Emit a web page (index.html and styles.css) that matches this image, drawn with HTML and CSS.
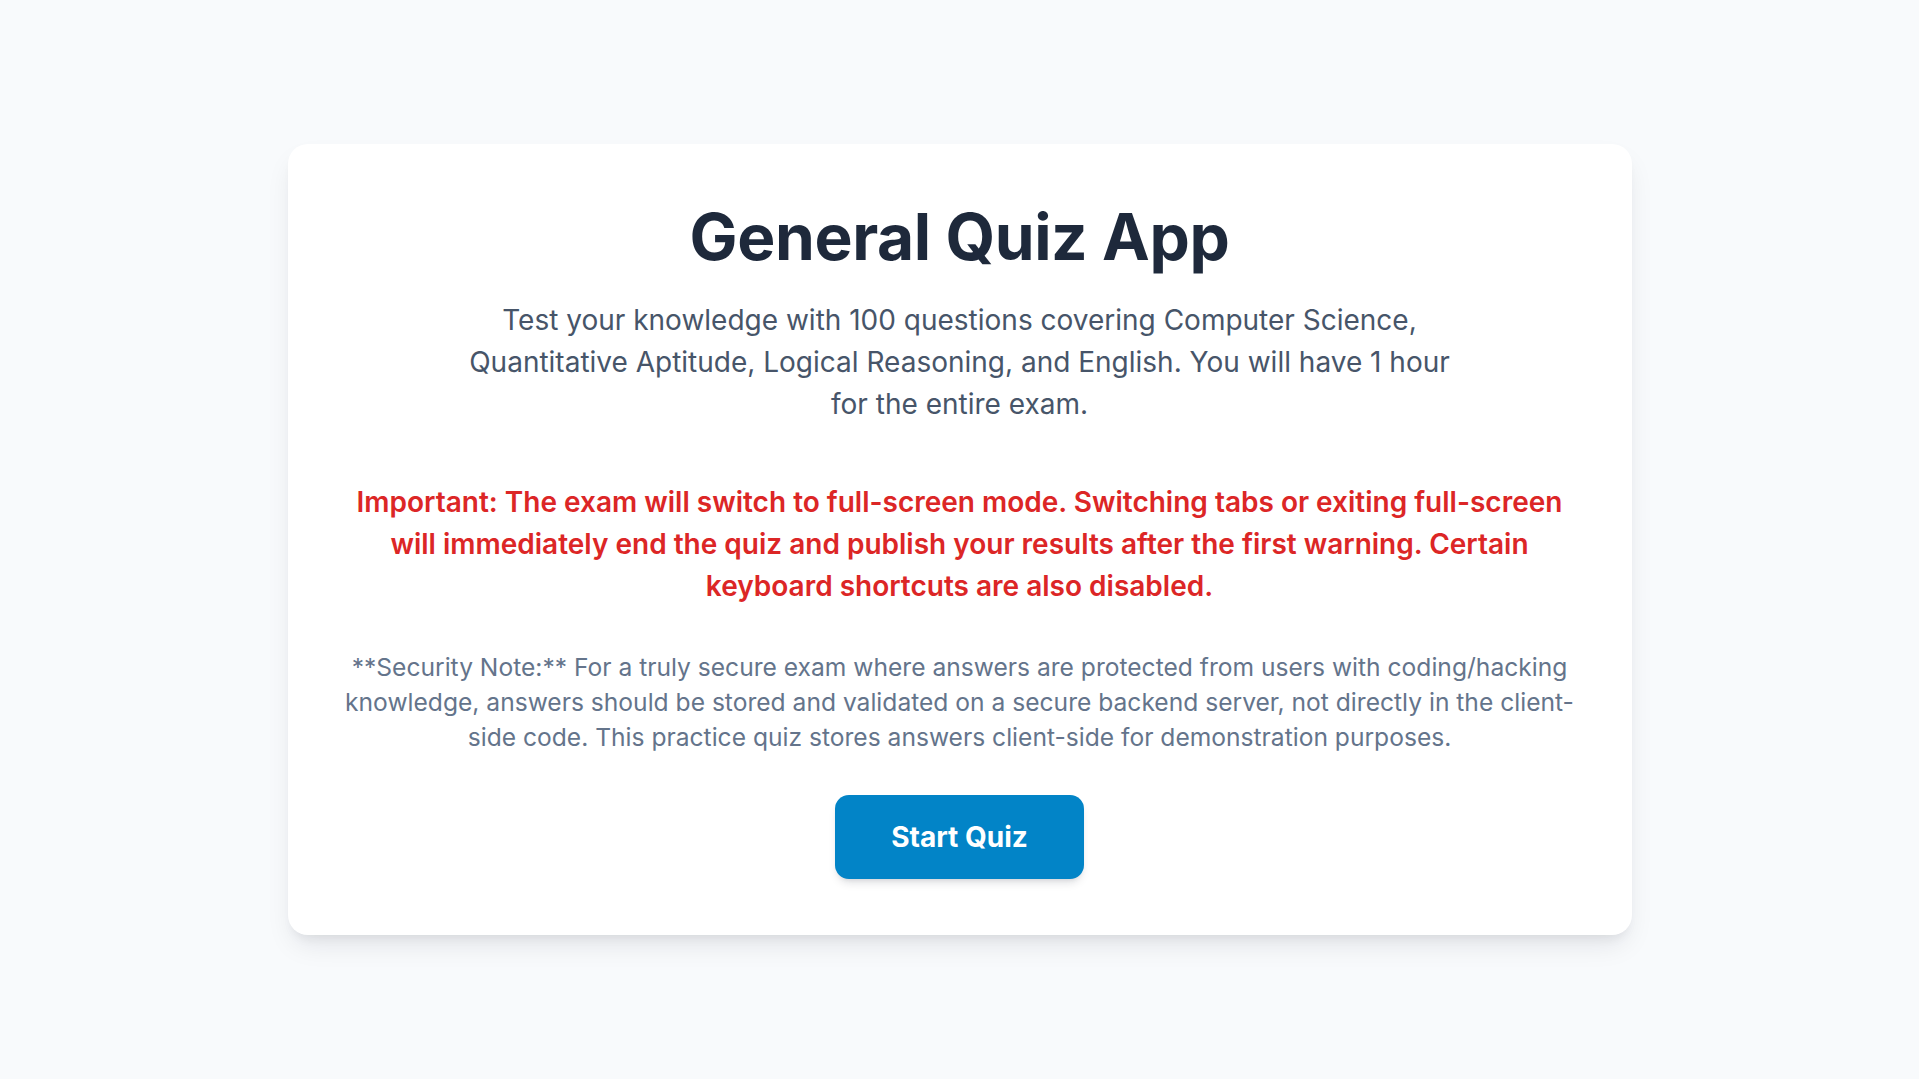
FILE: index.html
```html
<!DOCTYPE html>
<html lang="en">
<head>
<meta charset="utf-8">
<title>General Quiz App</title>
<link rel="stylesheet" href="styles.css">
</head>
<body>
<main class="page">
  <section class="card">
    <h1 class="title">General Quiz App</h1>
    <p class="intro">Test your knowledge with 100 questions covering Computer Science, Quantitative Aptitude, Logical Reasoning, and English. You will have 1 hour for the entire exam.</p>
    <p class="warning">Important: The exam will switch to full-screen mode. Switching tabs or exiting full-screen will immediately end the quiz and publish your results after the first warning. Certain keyboard shortcuts are also disabled.</p>
    <p class="note">**Security Note:** For a truly secure exam where answers are protected from users with coding/hacking knowledge, answers should be stored and validated on a secure backend server, not directly in the client-side code. This practice quiz stores answers client-side for demonstration purposes.</p>
    <button class="start" type="button">Start Quiz</button>
  </section>
</main>
</body>
</html>
```

FILE: styles.css
```css
* { box-sizing: border-box; }
html, body { margin: 0; padding: 0; }
body {
  background: #f8fafc;
  font-family: Inter, "Noto Sans", "Liberation Sans", sans-serif;
  color: #1e293b;
}
.page {
  min-height: 100vh;
  display: flex;
  align-items: center;
  justify-content: center;
}
.card {
  width: 1344px;
  background: #ffffff;
  border-radius: 20px;
  padding: 56px;
  box-shadow: 0 14px 28px -6px rgba(15, 23, 42, 0.10), 0 8px 12px -6px rgba(15, 23, 42, 0.08);
  display: flex;
  flex-direction: column;
  align-items: center;
  text-align: center;
}
.title {
  margin: 0 0 26px;
  font-size: 64px;
  line-height: 1.15;
  font-weight: 700;
  color: #1e293b;
  letter-spacing: -0.4px;
}
.intro {
  margin: 0 0 56px;
  max-width: 1008px;
  font-size: 28px;
  line-height: 1.5;
  color: #475569;
}
.warning {
  margin: 0 0 43px;
  font-size: 28px;
  line-height: 1.5;
  font-weight: 600;
  color: #dc2626;
}
.note {
  margin: 0 0 40px;
  font-size: 24.6px;
  line-height: 1.42;
  color: #64748b;
}
.start {
  border: none;
  background: #0284c7;
  color: #ffffff;
  font-family: inherit;
  font-size: 28px;
  line-height: 42px;
  font-weight: 700;
  padding: 21px 56px;
  border-radius: 14px;
  box-shadow: 0 6px 10px -3px rgba(15, 23, 42, 0.15), 0 3px 5px -3px rgba(15, 23, 42, 0.1);
  cursor: pointer;
}
```
